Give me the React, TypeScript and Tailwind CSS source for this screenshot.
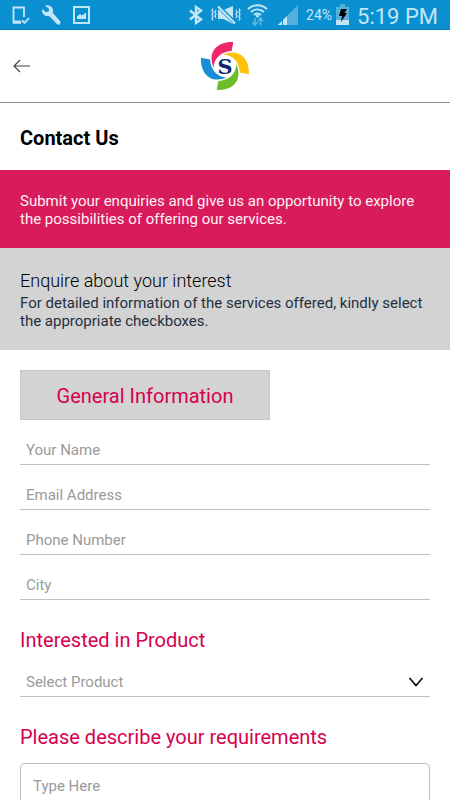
import type { ReactNode } from "react";

const fields = [
  { id: "name", label: "Your Name", type: "text" },
  { id: "email", label: "Email Address", type: "email" },
  { id: "phone", label: "Phone Number", type: "tel" },
  { id: "city", label: "City", type: "text" },
];

function StatusBar() {
  return (
    <div className="flex h-[30px] items-center justify-between border-b border-[#0a7dbd] bg-[#0a90d1] px-3 text-[#c3e6f6]">
      <div className="flex items-center">
        <svg width="18" height="20" viewBox="0 0 18 20" fill="none" stroke="currentColor">
          <path d="M12 12V2.5H1.500v15H9" strokeWidth="1.800" />
          <path d="M1 17h8" strokeWidth="3" />
          <path d="M10 15.500l2.500 2.500L17 13" strokeWidth="1.800" />
        </svg>
        <svg className="ml-3" width="19" height="20" viewBox="0 0 19 20" fill="currentColor">
          <path d="M3 .5C5.500 -.3 8.500.3 10 2.500c1.200 1.800 1.200 3.500.7 5.200l7.300 8.300c.8 1.200.7 2.200-.1 3s-2 .9-3 0L7.200 11C5 11.600 2.800 11 1.400 9.300.1 7.700-.1 5.700.4 4l3.500 3.300 2.800-.7.500-2.600z" />
        </svg>
        <svg className="ml-3" width="17" height="18" viewBox="0 0 17 18">
          <rect x="1" y="1" width="15" height="16" fill="none" stroke="currentColor" strokeWidth="2" />
          <path d="M4 13v-2.500l3-2.500 2 1.500 4-3V13z" fill="currentColor" />
        </svg>
      </div>
      <div className="flex items-center">
        <svg width="14" height="20" viewBox="0 0 14 20" fill="none" stroke="currentColor" strokeWidth="2.400">
          <path d="M1 5.500l11 9-5 3.500V2l5 3.500-11 9" />
        </svg>
        <svg className="ml-2" width="30" height="20" viewBox="0 0 30 20" fill="none" stroke="currentColor">
          <path d="M2 3.500L1 5.500l1 2-1 2 1 2-1 2 1 2M5 5L4 7l1 2-1 2 1 2M28 3.500l1 2-1 2 1 2-1 2 1 2-1 2M25 5l1 2-1 2 1 2-1 2" strokeWidth="1.300" />
          <path d="M7 5h5.500L22 1v18l-9.500-5H7z" fill="currentColor" stroke="none" />
          <path d="M6 0l19 19" className="stroke-[#0a90d1]" strokeWidth="4" />
          <path d="M7 1.500L24 18.500" strokeWidth="2.200" />
        </svg>
        <svg className="ml-1.5" width="21" height="22" viewBox="0 0 21 22" fill="none" stroke="currentColor" strokeWidth="2">
          <path d="M1 5C6.500 0 14.500 0 20 5M4 8c4-3.500 9-3.500 13 0M7 11c2.300-2 4.700-2 7 0" />
          <circle cx="10.500" cy="12" r="1.500" fill="currentColor" stroke="none" />
          <path d="M8 14v7M5.500 18L8 21l2.500-3M13.500 21v-7M11 17l2.500-3 2.500 3" className="stroke-[#5fb9e3]" strokeWidth="1.600" />
        </svg>
        <svg className="ml-2.5" width="20" height="20" viewBox="0 0 20 20">
          <path d="M0 20L20 0v20z" className="fill-[#54b1df]" />
          <path d="M0 20l9-9v9z" fill="currentColor" />
          <path d="M4.500 14v6" className="stroke-[#0a90d1]" />
        </svg>
        <span className="ml-2 text-sm">24%</span>
        <svg className="ml-1" width="13" height="21" viewBox="0 0 13 21">
          <path d="M4 0h5v3h4v18H0V3h4z" className="fill-[#54b1df]" />
          <path d="M0 16h13v5H0z" fill="currentColor" />
          <path d="M5 5h6L8.500 9H11l-6 9 1-6H3z" className="fill-black" />
        </svg>
        <span className="ml-2 pt-1 text-[22px] leading-[26px]">5:19 PM</span>
      </div>
    </div>
  );
}

function Petal({ className, transform }: { className: string; transform?: string }) {
  return (
    <path
      className={className}
      transform={transform}
      d="M24 -69C-12 -71 -39 -52 -39 -22Q-39 -8 -33 6C-32 -20 -14 -41 19 -43z"
    />
  );
}

function Logo() {
  return (
    <svg width="50" height="50" viewBox="-72 -72 144 144" role="img" aria-label="Company logo">
      <Petal className="fill-[#f0286a]" />
      <Petal className="fill-[#ffc20a]" transform="rotate(90)" />
      <Petal className="fill-[#6cbc2b]" transform="rotate(180)" />
      <Petal className="fill-[#168fd8]" transform="rotate(270)" />
      <text
        x="0"
        y="22"
        textAnchor="middle"
        className="fill-[#12246f] font-['DejaVu_Serif',serif] text-[60px] font-bold"
      >
        S
      </text>
    </svg>
  );
}

function Header() {
  return (
    <header className="grid h-[73px] grid-cols-[1fr_auto_1fr] items-center border-b border-[#8c8c8c] px-3">
      <button type="button" aria-label="Back" className="flex h-10 w-10 items-center">
        <svg width="19" height="14" viewBox="0 0 19 14" fill="none" className="stroke-[#444]" strokeWidth="1.200">
          <path d="M18 7H2M8 1L2 7l6 6" />
        </svg>
      </button>
      <Logo />
    </header>
  );
}

function SectionTitle({ htmlFor, children }: { htmlFor: string; children: ReactNode }) {
  return (
    <label htmlFor={htmlFor} className="block text-xl leading-6 text-[#d6004f]">
      {children}
    </label>
  );
}

export default function App() {
  return (
    <div className="min-h-screen bg-white font-[Roboto,sans-serif] text-black">
      <StatusBar />
      <Header />
      <main>
        <h1 className="px-5 pt-[23px] pb-5 text-xl leading-6 font-bold">Contact Us</h1>
        <p className="bg-[#d81b5b] px-5 pt-[22px] pb-5 text-[15px] leading-[18px] text-[#fff0f5]">
          Submit your enquiries and give us an opportunity to explore the possibilities of offering our services.
        </p>
        <section className="bg-[#d3d3d3] px-5 py-5">
          <h2 className="text-lg leading-[26px] font-light">Enquire about your interest</h2>
          <p className="text-[15px] leading-[18px] text-[#243040]">
            For detailed information of the services offered, kindly select the appropriate checkboxes.
          </p>
        </section>
        <form className="px-5 py-5">
          <button type="button" className="h-[50px] w-[250px] border border-[#c8c8c8] bg-[#d3d3d3] pt-0.5 text-xl text-[#d6004f]">
            General Information
          </button>
          <div className="flex flex-col gap-4 pt-4">
            {fields.map((field) => (
              <input
                key={field.id}
                id={field.id}
                type={field.type}
                aria-label={field.label}
                placeholder={field.label}
                className="h-[29px] w-full border-b border-[#c0c0c0] px-1.5 text-[15px] placeholder:text-[#9a9a9a]"
              />
            ))}
          </div>
          <div className="pt-7">
            <SectionTitle htmlFor="product">Interested in Product</SectionTitle>
            <div className="mt-4 grid items-center border-b border-[#c0c0c0]">
              <select
                id="product"
                className="col-start-1 row-start-1 h-7 w-full appearance-none px-1.5 text-[15px] text-[#9a9a9a]"
              >
                <option>Select Product</option>
              </select>
              <svg
                className="pointer-events-none col-start-1 row-start-1 mr-1.5 justify-self-end stroke-black"
                width="16"
                height="10"
                viewBox="0 0 16 10"
                fill="none"
                strokeWidth="1.500"
              >
                <path d="M1.500 1L8 8.500 14.500 1" />
              </svg>
            </div>
          </div>
          <div className="pt-7">
            <SectionTitle htmlFor="requirements">Please describe your requirements</SectionTitle>
            <textarea
              id="requirements"
              placeholder="Type Here"
              className="mt-3.5 block h-[120px] w-full resize-none rounded-[5px] border border-[#bbb] px-3 py-[11px] text-[15px] placeholder:text-[#9a9a9a]"
            />
          </div>
        </form>
      </main>
    </div>
  );
}
